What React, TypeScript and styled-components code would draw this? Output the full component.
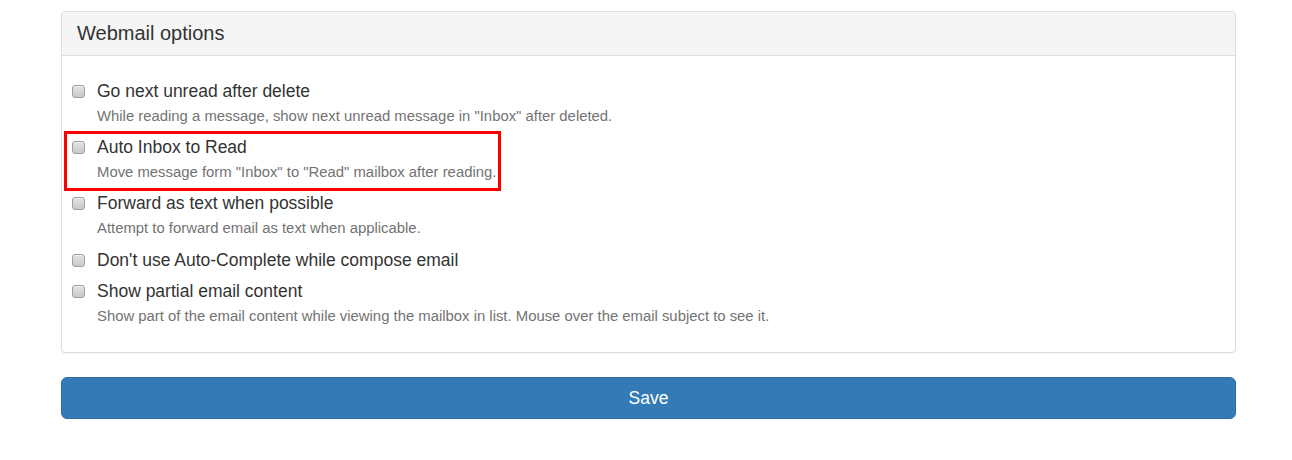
import React from "react";
import styled, { createGlobalStyle } from "styled-components";

const GlobalStyle = createGlobalStyle`
  html, body {
    margin: 0;
    padding: 0;
    background: #fff;
    font-family: "Liberation Sans", Arial, Helvetica, sans-serif;
    color: #333;
  }
`;

const Page = styled.div`
  padding: 11px 56px 0 61px;
`;

const Panel = styled.section`
  border: 1px solid #ddd;
  border-radius: 4px;
  background: #fff;
  box-shadow: 0 1px 1px rgba(0, 0, 0, 0.05);
  margin-bottom: 24px;
`;

const PanelHeading = styled.header`
  background: #f5f5f5;
  border-bottom: 1px solid #ddd;
  border-radius: 3px 3px 0 0;
  padding: 10px 15px;
  height: 23px;
  display: flex;
  align-items: center;
`;

const PanelTitle = styled.h3`
  margin: 0;
  font-size: 20px;
  font-weight: 400;
  line-height: 23px;
  color: #333;
`;

const PanelBody = styled.div`
  padding: 23px 10px 17px;
`;

const Option = styled.label<{ $highlight?: boolean }>`
  position: relative;
  display: grid;
  grid-template-columns: 13px auto;
  column-gap: 12px;
  width: fit-content;
  margin-bottom: 6.2px;
  cursor: pointer;

  &::after {
    content: "";
    display: ${(p) => (p.$highlight ? "block" : "none")};
    position: absolute;
    top: -4px;
    left: -8px;
    right: -5px;
    bottom: -6px;
    border: 3px solid #ff0000;
    pointer-events: none;
  }
`;

const Check = styled.span`
  grid-column: 1;
  grid-row: 1;
  align-self: center;
  width: 13px;
  height: 13px;
  box-sizing: border-box;
  border: 1px solid #a0a0a0;
  border-radius: 3px;
  background: linear-gradient(#e2e2e2, #cacaca);
  box-shadow: inset 0 1px 0 rgba(255, 255, 255, 0.5);
`;

const LabelText = styled.span`
  grid-column: 2;
  grid-row: 1;
  font-size: 17.5px;
  line-height: 25px;
  color: #333;
`;

const Help = styled.span`
  grid-column: 2;
  grid-row: 2;
  font-size: 14.86px;
  line-height: 25px;
  color: #737373;
`;

const SaveButton = styled.button`
  display: block;
  width: 100%;
  height: 42px;
  box-sizing: border-box;
  border: 1px solid #2e6da4;
  border-radius: 6px;
  background: #337ab7;
  color: #fff;
  font-family: "Liberation Sans", Arial, Helvetica, sans-serif;
  font-size: 17.5px;
  line-height: 24px;
  padding: 0;
  cursor: pointer;
`;

type Item = { label: string; help?: string; highlight?: boolean };

const items: Item[] = [
  {
    label: "Go next unread after delete",
    help: 'While reading a message, show next unread message in "Inbox" after deleted.',
  },
  {
    label: "Auto Inbox to Read",
    help: 'Move message form "Inbox" to "Read" mailbox after reading.',
    highlight: true,
  },
  {
    label: "Forward as text when possible",
    help: "Attempt to forward email as text when applicable.",
  },
  { label: "Don't use Auto-Complete while compose email" },
  {
    label: "Show partial email content",
    help: "Show part of the email content while viewing the mailbox in list. Mouse over the email subject to see it.",
  },
];

export default function App() {
  return (
    <>
      <GlobalStyle />
      <Page>
        <Panel>
          <PanelHeading>
            <PanelTitle>Webmail options</PanelTitle>
          </PanelHeading>
          <PanelBody>
            {items.map((it) => (
              <Option key={it.label} $highlight={it.highlight}>
                <Check />
                <LabelText>{it.label}</LabelText>
                {it.help && <Help>{it.help}</Help>}
              </Option>
            ))}
          </PanelBody>
        </Panel>
        <SaveButton type="button">Save</SaveButton>
      </Page>
    </>
  );
}
